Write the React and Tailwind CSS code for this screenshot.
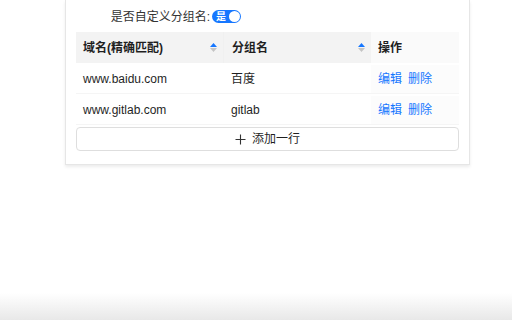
import { useState } from "react";

const rows = [
  { domain: "www.baidu.com", group: "百度" },
  { domain: "www.gitlab.com", group: "gitlab" },
];

function SortIcon() {
  return (
    <span className="flex flex-col items-center gap-[1px]">
      <svg width="7" height="4" viewBox="0 0 7 4">
        <path d="M3.5 0 L7 4 L0 4 Z" fill="#1677ff" />
      </svg>
      <svg width="7" height="4" viewBox="0 0 7 4">
        <path d="M0 0 L7 0 L3.5 4 Z" fill="#c4c4c4" />
      </svg>
    </span>
  );
}

export default function App() {
  const [custom, setCustom] = useState(true);

  return (
    <div
      className="h-[320px] w-[512px] flex flex-col bg-white text-[12px] text-[#1f1f1f] overflow-hidden"
      style={{ fontFamily: "'Liberation Sans', 'Noto Sans CJK SC', sans-serif" }}
    >
      <div className="ml-[65px] w-[405px] border-x border-b border-[#e6e6e6] bg-white shadow-[0_2px_3px_rgba(0,0,0,0.08)] px-[10px] pt-[1px] pb-[13px]">
        <div className="flex items-center h-[31px]">
          <span className="w-[134px] text-right text-[#333]">是否自定义分组名:</span>
          <button
            onClick={() => setCustom(!custom)}
            className="ml-[2px] w-[29px] h-[13px] rounded-full bg-[#1677ff] flex items-center justify-between pl-[4px] pr-[1px]"
          >
            <span className="text-white text-[10px] leading-none font-semibold">是</span>
            <span className="w-[11px] h-[11px] rounded-full bg-white" />
          </button>
        </div>

        <div className="flex h-[31px] font-semibold">
          <div className="w-[147px] bg-[#f3f3f3] flex items-center justify-between pl-[7px] pr-[6px]">
            <span>域名(精确匹配)</span>
            <SortIcon />
          </div>
          <div className="w-[148px] bg-[#f3f3f3] flex items-center justify-between pl-[8px] pr-[6px] border-l border-[#f0f0f0]">
            <span>分组名</span>
            <SortIcon />
          </div>
          <div className="flex-1 bg-[#fafafa] flex items-center pl-[7px]">
            <span>操作</span>
          </div>
        </div>

        {rows.map((r) => (
          <div key={r.domain} className="flex h-[31px] border-b border-[#f5f5f5] pt-[2px]">
            <div className="w-[147px] flex items-center pl-[7px]">{r.domain}</div>
            <div className="w-[148px] flex items-center pl-[8px]">{r.group}</div>
            <div className="flex-1 flex items-center pl-[7px] gap-[6px] text-[#1677ff] bg-[#fcfcfc]">
              <span>编辑</span>
              <span>删除</span>
            </div>
          </div>
        ))}

        <button className="mt-[2px] w-full h-[24px] border border-[#dedede] rounded-[4px] flex items-center justify-center gap-[6px] text-[#1f1f1f]">
          <svg width="11" height="11" viewBox="0 0 11 11">
            <path d="M5.5 0.5 V10.5 M0.5 5.5 H10.5" stroke="#333" strokeWidth="1.1" />
          </svg>
          <span>添加一行</span>
        </button>
      </div>

      <div className="flex-1" />
      <div className="h-[27px] bg-gradient-to-b from-white to-[#e8e8e8]" />
    </div>
  );
}
